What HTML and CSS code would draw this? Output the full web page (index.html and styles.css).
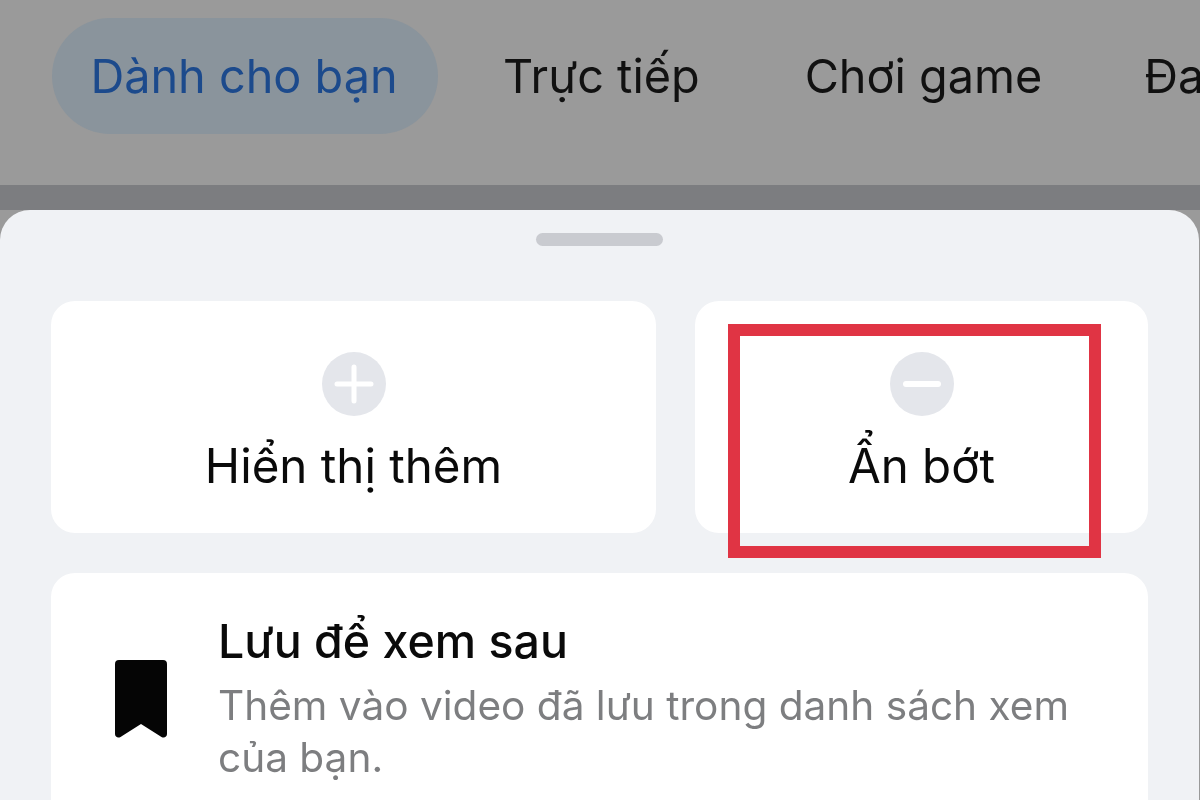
FILE: index.html
```html
<!DOCTYPE html>
<html lang="vi">
<head>
    <meta charset="UTF-8">
    <meta name="viewport" content="width=device-width, initial-scale=1.0">
    <title>Dành cho bạn</title>
    <link rel="stylesheet" href="styles.css">
</head>
<body>
    <nav class="tabs">
        <a class="tab tab-active">Dành cho bạn</a>
        <a class="tab tab-live">Trực tiếp</a>
        <a class="tab tab-game">Chơi game</a>
        <a class="tab tab-more">Đa</a>
    </nav>
    <div class="divider"></div>

    <div class="backdrop">
        <section class="sheet">
            <div class="handle"></div>

            <div class="actions">
                <div class="action action-more">
                    <svg class="action-icon" viewBox="0 0 64 64">
                        <circle cx="32" cy="32" r="32" fill="#e4e6eb"/>
                        <path d="M32 15v34M15 32h34" stroke="#fff" stroke-width="5" stroke-linecap="round"/>
                    </svg>
                    <span class="action-label">Hiển thị thêm</span>
                </div>
                <div class="action action-less">
                    <svg class="action-icon" viewBox="0 0 64 64">
                        <circle cx="32" cy="32" r="32" fill="#e4e6eb"/>
                        <path d="M16 32h32" stroke="#fff" stroke-width="6" stroke-linecap="round"/>
                    </svg>
                    <span class="action-label">Ẩn bớt</span>
                    <div class="highlight"></div>
                </div>
            </div>

            <div class="row">
                <svg class="row-icon" viewBox="0 0 52 78">
                    <path d="M4 0h44a4 4 0 0 1 4 4v70c0 3-3 4.500-5.500 3L26 64 5.500 77C3 78.500 0 77 0 74V4a4 4 0 0 1 4-4z" fill="#050505"/>
                </svg>
                <div class="row-text">
                    <div class="row-title">Lưu để xem sau</div>
                    <div class="row-desc">Thêm vào video đã lưu trong danh sách xem của bạn.</div>
                </div>
            </div>
        </section>
    </div>
</body>
</html>
```

FILE: styles.css
```css
* {
    box-sizing: border-box;
}
html, body {
    margin: 0;
    height: 800px;
    overflow: hidden;
    background: #9a9a9a;
}
body {
    font-family: Inter, "Liberation Sans", sans-serif;
    color: #0a0a0a;
    filter: blur(0.5px);
}

/* top tabs, dimmed behind the sheet */
.tabs {
    height: 185px;
    padding: 18px 0 0 52px;
    background: #9a9a9a;
    display: flex;
    align-items: flex-start;
    white-space: nowrap;
    overflow: hidden;
}
.tab {
    flex: none;
    height: 116px;
    display: flex;
    align-items: center;
    font-size: 46.8px;
    color: #111;
}
.tab-active {
    width: 386px;
    padding-right: 2px;
    justify-content: center;
    border-radius: 58px;
    background: #8a949c;
    color: #1c4a8c;
}
.tab-live { margin-left: 65px; }
.tab-game { margin-left: 105px; }
.tab-more { margin-left: 102px; }

.divider {
    height: 25px;
    background: #7c7d80;
}

.backdrop {
    padding-right: 1px;
}
.sheet {
    height: 590px;
    padding: 23px 51px 0 51px;
    background: #f0f2f5;
    border-radius: 30px 30px 0 0;
}
.handle {
    width: 127px;
    height: 13px;
    margin: 0 auto;
    border-radius: 7px;
    background: #c9cbd0;
}

.actions {
    display: flex;
    gap: 39px;
    margin-top: 55px;
}
.action {
    position: relative;
    height: 232px;
    padding-top: 51px;
    display: flex;
    flex-direction: column;
    align-items: center;
    background: #fff;
    border-radius: 24px;
}
.action-more { width: 605px; }
.action-less { width: 453px; }
.action-icon {
    width: 64px;
    height: 64px;
}
.action-label {
    margin-top: 20px;
    font-size: 47.5px;
    line-height: 60px;
}
/* red box drawn over the screenshot */
.highlight {
    position: absolute;
    left: 33px;
    top: 23px;
    width: 373px;
    height: 234px;
    border: 12px solid #e03444;
}

.row {
    display: flex;
    align-items: flex-start;
    margin-top: 40px;
    height: 260px;
    padding: 40px 64px 0;
    background: #fff;
    border-radius: 24px;
}
.row-icon {
    flex: none;
    width: 52px;
    height: 78px;
    margin-top: 47px;
}
.row-text {
    margin-left: 51px;
}
.row-title {
    font-size: 46.5px;
    line-height: 56px;
    font-weight: 500;
}
.row-desc {
    margin-top: 11px;
    font-size: 40.6px;
    line-height: 52px;
    color: #7d7e80;
}
```
